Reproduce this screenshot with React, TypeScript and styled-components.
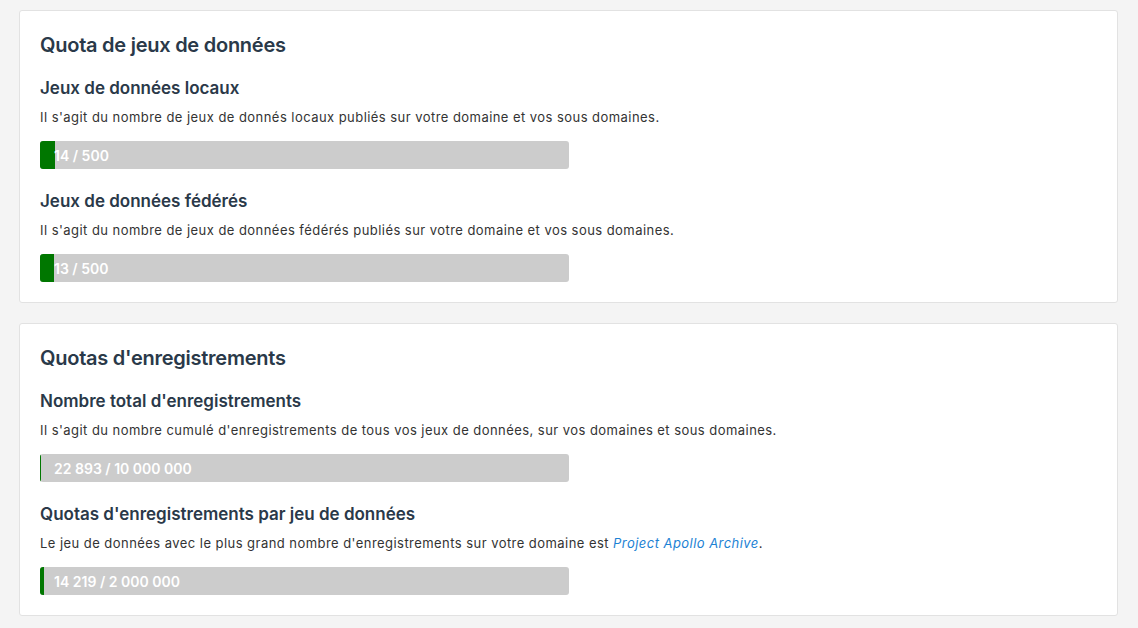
import React from 'react';
import styled, { createGlobalStyle } from 'styled-components';

const GlobalStyle = createGlobalStyle`
  html, body {
    margin: 0;
    padding: 0;
    background: #f4f4f4;
  }
  body {
    font-family: Inter, "Liberation Sans", Arial, sans-serif;
    color: #333333;
    -webkit-font-smoothing: antialiased;
  }
`;

const Page = styled.div`
  display: flex;
  flex-direction: column;
  gap: 20px;
  padding: 10px 20px 14px 19px;
`;

const Card = styled.section`
  background: #ffffff;
  border: 1px solid #e2e2e2;
  border-radius: 3px;
  padding: 20px;
`;

const CardTitle = styled.h2`
  margin: 0 0 18px 0;
  font-size: 20px;
  line-height: 28px;
  font-weight: 600;
  color: #2a3949;
  letter-spacing: -0.25px;
`;

const Quota = styled.div`
  & + & {
    margin-top: 21px;
  }
`;

const QuotaTitle = styled.h3`
  margin: 0 0 8px 0;
  font-size: 17px;
  line-height: 22px;
  font-weight: 600;
  color: #2a3949;
`;

const QuotaDescription = styled.p`
  margin: 0 0 14px 0;
  font-size: 13px;
  line-height: 20px;
  letter-spacing: 0.45px;
  color: #333333;
`;

const DatasetLink = styled.a`
  color: #1c82d4;
  font-style: italic;
  text-decoration: none;
`;

const ProgressBar = styled.div`
  position: relative;
  width: 529px;
  height: 28px;
  background: #cccccc;
  border-radius: 3px;
  overflow: hidden;
  display: flex;
  align-items: center;
`;

const ProgressFill = styled.div`
  position: absolute;
  left: 0;
  top: 0;
  bottom: 0;
  background: #007700;
`;

const ProgressLabel = styled.span`
  position: relative;
  padding-left: 14px;
  font-size: 14px;
  font-weight: 600;
  color: #ffffff;
`;

interface QuotaItem {
  title: string;
  description: React.ReactNode;
  current: number;
  max: number;
  label: string;
}

interface QuotaSection {
  title: string;
  items: QuotaItem[];
}

const sections: QuotaSection[] = [
  {
    title: 'Quota de jeux de données',
    items: [
      {
        title: 'Jeux de données locaux',
        description: "Il s'agit du nombre de jeux de donnés locaux publiés sur votre domaine et vos sous domaines.",
        current: 14,
        max: 500,
        label: '14 / 500',
      },
      {
        title: 'Jeux de données fédérés',
        description: "Il s'agit du nombre de jeux de données fédérés publiés sur votre domaine et vos sous domaines.",
        current: 13,
        max: 500,
        label: '13 / 500',
      },
    ],
  },
  {
    title: "Quotas d'enregistrements",
    items: [
      {
        title: "Nombre total d'enregistrements",
        description:
          "Il s'agit du nombre cumulé d'enregistrements de tous vos jeux de données, sur vos domaines et sous domaines.",
        current: 22893,
        max: 10000000,
        label: '22 893 / 10 000 000',
      },
      {
        title: "Quotas d'enregistrements par jeu de données",
        description: (
          <>
            Le jeu de données avec le plus grand nombre d'enregistrements sur votre domaine est{' '}
            <DatasetLink href="#">Project Apollo Archive</DatasetLink>.
          </>
        ),
        current: 14219,
        max: 2000000,
        label: '14 219 / 2 000 000',
      },
    ],
  },
];

export default function App() {
  return (
    <Page>
      <GlobalStyle />
      {sections.map((section) => (
        <Card key={section.title}>
          <CardTitle>{section.title}</CardTitle>
          {section.items.map((item) => (
            <Quota key={item.title}>
              <QuotaTitle>{item.title}</QuotaTitle>
              <QuotaDescription>{item.description}</QuotaDescription>
              <ProgressBar>
                <ProgressFill style={{ width: `${(item.current / item.max) * 100}%` }} />
                <ProgressLabel>{item.label}</ProgressLabel>
              </ProgressBar>
            </Quota>
          ))}
        </Card>
      ))}
    </Page>
  );
}
